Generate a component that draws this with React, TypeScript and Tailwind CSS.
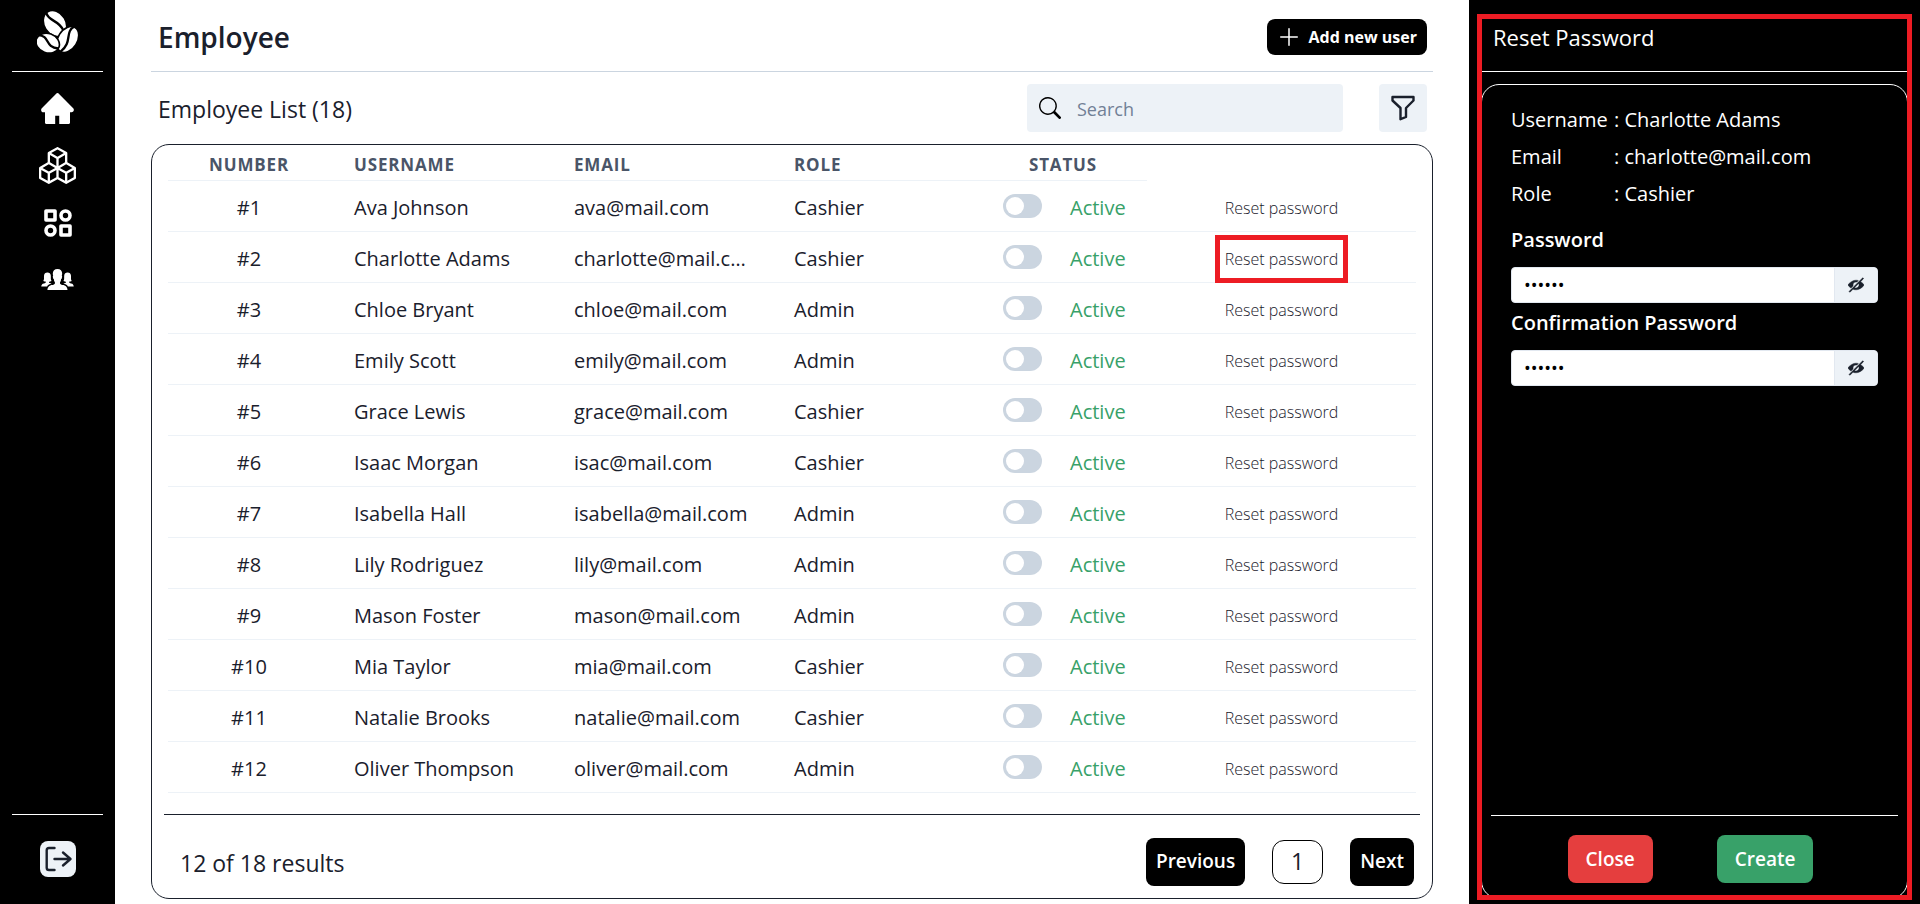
import type { ReactNode } from "react";
import { AiFillHome } from "react-icons/ai";
import { BsBoxes, BsPlusLg, BsSearch } from "react-icons/bs";
import { IoIosPeople } from "react-icons/io";

type Employee = { name: string; email: string; role: "Cashier" | "Admin" };

const employees: Employee[] = [
  { name: "Ava Johnson", email: "ava@mail.com", role: "Cashier" },
  { name: "Charlotte Adams", email: "charlotte@mail.com", role: "Cashier" },
  { name: "Chloe Bryant", email: "chloe@mail.com", role: "Admin" },
  { name: "Emily Scott", email: "emily@mail.com", role: "Admin" },
  { name: "Grace Lewis", email: "grace@mail.com", role: "Cashier" },
  { name: "Isaac Morgan", email: "isac@mail.com", role: "Cashier" },
  { name: "Isabella Hall", email: "isabella@mail.com", role: "Admin" },
  { name: "Lily Rodriguez", email: "lily@mail.com", role: "Admin" },
  { name: "Mason Foster", email: "mason@mail.com", role: "Admin" },
  { name: "Mia Taylor", email: "mia@mail.com", role: "Cashier" },
  { name: "Natalie Brooks", email: "natalie@mail.com", role: "Cashier" },
  { name: "Oliver Thompson", email: "oliver@mail.com", role: "Admin" },
];

const selected = employees[1];

function BeansLogo() {
  return (
    <svg viewBox="0 0 123 125" className="h-[42px] w-[41px]" aria-hidden="true">
      <g fill="#fff" stroke="#000" strokeWidth="5">
        <ellipse cx="54" cy="37" rx="30" ry="39" transform="rotate(-32 54 37)" stroke="none" />
        <path d="M28 6C36 32 66 26 79 58" fill="none" strokeWidth="7" />
        <ellipse cx="92" cy="85" rx="29" ry="42" transform="rotate(32 92 85)" />
        <path d="M112 46C82 62 108 94 70 122" fill="none" strokeWidth="7" />
        <ellipse cx="32" cy="96" rx="36" ry="29" transform="rotate(20 32 96)" />
        <path d="M4 72C40 74 22 108 64 112" fill="none" strokeWidth="7" />
      </g>
    </svg>
  );
}

function CategoryIcon() {
  return (
    <svg viewBox="0 0 24 24" className="size-9" fill="none" stroke="currentColor" strokeWidth="2.4" strokeLinejoin="round" aria-hidden="true">
      <rect x="4" y="4" width="6" height="6" />
      <circle cx="17" cy="7" r="3" />
      <circle cx="7" cy="17" r="3" />
      <rect x="14" y="14" width="6" height="6" />
    </svg>
  );
}

function LogoutIcon() {
  return (
    <svg viewBox="0 0 36 36" className="size-9" fill="none" stroke="#1A202C" strokeWidth="2.4" strokeLinecap="round" strokeLinejoin="round" aria-hidden="true">
      <path d="M14.5 7H9a2.3 2.3 0 0 0-2.3 2.3v17.4A2.3 2.3 0 0 0 9 29h5.5M14.5 18h16M23 11.5l7.500 6.500-7.500 6.500" />
    </svg>
  );
}

function FilterIcon() {
  return (
    <svg viewBox="0 0 24 26" className="h-[26px] w-6" fill="none" stroke="#1A202C" strokeWidth="2.4" strokeLinejoin="round" aria-hidden="true">
      <path d="M1.500 2h21v3.500l-7.500 7.500v9l-5.500 2.200V13L1.500 5.500z" />
    </svg>
  );
}

function EyeOffIcon() {
  return (
    <svg viewBox="0 0 24 24" className="size-4" fill="#1A202C" stroke="#1A202C" strokeWidth="0.6" aria-hidden="true">
      <path d="M23.2,10.549a20.954,20.954,0,0,0-4.3-3.6l4-3.995a1,1,0,1,0-1.414-1.414l-.018.018a.737.737,0,0,1-.173.291l-19.5,19.5c-.008.007-.018.009-.026.017a1,1,0,0,0,1.631,1.088l4.146-4.146a11.26,11.26,0,0,0,4.31.939h.3c4.256,0,8.489-2.984,11.051-5.8A2.171,2.171,0,0,0,23.2,10.549ZM16.313,13.27a4.581,4.581,0,0,1-3,3.028,4.3,4.3,0,0,1-3.1-.19.253.253,0,0,1-.068-.407l5.56-5.559a.252.252,0,0,1,.407.067A4.3,4.3,0,0,1,16.313,13.27Z" />
      <path d="M7.615,13.4a.244.244,0,0,0,.061-.24A4.315,4.315,0,0,1,7.5,12,4.5,4.5,0,0,1,12,7.5a4.276,4.276,0,0,1,1.16.173.244.244,0,0,0,.24-.062l1.941-1.942a.254.254,0,0,0-.1-.421A10.413,10.413,0,0,0,12,4.75C7.7,4.692,3.4,7.7.813,10.549a2.15,2.15,0,0,0-.007,2.9,21.209,21.209,0,0,0,3.438,3.03.256.256,0,0,0,.326-.029Z" />
    </svg>
  );
}

function NavLink({ label, children }: { label: string; children: ReactNode }) {
  return (
    <a href="#" aria-label={label} className="flex h-[57px] items-center justify-center">
      {children}
    </a>
  );
}

function Sidebar() {
  return (
    <nav className="flex w-[115px] shrink-0 flex-col bg-black px-3 text-white">
      <div className="flex h-[72px] items-center justify-center border-b border-white pb-2">
        <BeansLogo />
      </div>
      <div className="flex-1 pt-2">
        <NavLink label="Home"><AiFillHome size={37} /></NavLink>
        <NavLink label="Products"><BsBoxes size={37} /></NavLink>
        <NavLink label="Categories"><CategoryIcon /></NavLink>
        <NavLink label="Employees"><IoIosPeople size={37} /></NavLink>
      </div>
      <div className="flex h-[90px] justify-center border-t border-white pt-[26px]">
        <button type="button" aria-label="Log out" className="size-9 rounded-lg bg-[#EDF2F7]">
          <LogoutIcon />
        </button>
      </div>
    </nav>
  );
}

function EmployeeTable() {
  return (
    <table className="w-full table-fixed border-separate border-spacing-0 text-left">
      <colgroup>
        <col className="w-[162px]" />
        <col className="w-[220px]" />
        <col className="w-[220px]" />
        <col className="w-[209px]" />
        <col className="w-[168px]" />
        <col />
      </colgroup>
      <thead>
        <tr className="h-9 text-[17px] leading-6 tracking-wider text-[#4A5568] uppercase">
          <th className="border-b border-[#EDF2F7] pt-1 text-center font-bold">Number</th>
          <th className="border-b border-[#EDF2F7] px-6 pt-1 font-bold">Username</th>
          <th className="border-b border-[#EDF2F7] px-6 pt-1 font-bold">Email</th>
          <th className="border-b border-[#EDF2F7] px-6 pt-1 font-bold">Role</th>
          <th className="border-b border-[#EDF2F7] pt-1 text-center font-bold">Status</th>
          <td />
        </tr>
      </thead>
      <tbody>
        {employees.map((e, i) => (
          <tr key={e.email} className="h-[51px] text-xl">
            <td className="border-b border-[#EDF2F7] pt-1 text-center">#{i + 1}</td>
            <td className="truncate border-b border-[#EDF2F7] pt-1 pl-6">{e.name}</td>
            <td className="truncate border-b border-[#EDF2F7] pt-1 pr-5 pl-6">{e.email}</td>
            <td className="border-b border-[#EDF2F7] px-6 pt-1">{e.role}</td>
            <td className="border-b border-[#EDF2F7] pl-6">
              <label className="flex items-center gap-7 text-[#38A169]">
                <input
                  type="checkbox"
                  role="switch"
                  className="h-6 w-[39px] shrink-0 appearance-none rounded-full bg-[#CBD5E0] p-[3px] before:block before:size-[18px] before:rounded-full before:bg-white checked:bg-[#38A169] checked:before:ml-auto"
                />
                <span className="pt-1">Active</span>
              </label>
            </td>
            <td className="border-b border-[#EDF2F7] pt-0.5 text-center">
              <button type="button" className="relative text-base font-light">
                Reset password
                {e === selected && (
                  <span className="pointer-events-none absolute -inset-x-2.5 -inset-y-3 border-[5px] border-[#ED1C24]" />
                )}
              </button>
            </td>
          </tr>
        ))}
      </tbody>
    </table>
  );
}

function EmployeePage() {
  return (
    <main className="flex min-w-0 flex-1 flex-col bg-white px-9 pb-[5px] text-[#1A202C]">
      <header className="flex h-[72px] items-center justify-between border-b border-[#CBD5E0] pt-0.5 pr-1.5 pl-[7px]">
        <h1 className="text-[28px] leading-9 font-semibold">Employee</h1>
        <button type="button" className="flex h-9 items-center gap-2 rounded-lg bg-black px-2.5 text-base font-bold text-white">
          <BsPlusLg size={24} />
          Add new user
        </button>
      </header>
      <div className="flex h-[72px] items-center justify-between pr-1.5 pl-[7px]">
        <h2 className="pt-0.5 text-[23px] font-[380]">Employee List (18)</h2>
        <div className="flex gap-9">
          <label className="flex h-12 w-[316px] items-center gap-4 rounded-sm bg-[#EDF2F7] px-3">
            <BsSearch size={22} className="shrink-0 text-black" />
            <input type="search" aria-label="Search" placeholder="Search" className="min-w-0 flex-1 bg-transparent pt-0.5 text-lg outline-none placeholder:text-[#718096]" />
          </label>
          <button type="button" aria-label="Filter" className="flex size-12 items-center justify-center rounded-sm bg-[#EDF2F7]">
            <FilterIcon />
          </button>
        </div>
      </div>
      <section className="flex flex-1 flex-col rounded-[18px] border border-[#1A202C] px-3">
        <div className="flex-1 px-1">
          <EmployeeTable />
        </div>
        <footer className="flex h-[84px] items-center justify-between border-t border-[#1A202C] pt-3.5 pr-1.5 pb-1 pl-4">
          <p className="pt-1 text-[23px] font-[380]">12 of 18 results</p>
          <div className="flex items-center gap-[27px]">
            <button type="button" className="h-12 rounded-lg bg-black px-2.5 text-[19px] font-semibold text-white">Previous</button>
            <span className="flex h-11 w-[51px] items-center justify-center rounded-xl border border-black text-[23px] font-[380]">1</span>
            <button type="button" className="h-12 rounded-lg bg-black px-2.5 text-[19px] font-semibold text-white">Next</button>
          </div>
        </footer>
      </section>
    </main>
  );
}

function Detail({ label, value }: { label: string; value: string }) {
  return (
    <div className="flex h-[37px] items-center text-xl">
      <dt className="w-[103px]">{label}</dt>
      <dd>: {value}</dd>
    </div>
  );
}

function PasswordField({ id, label }: { id: string; label: string }) {
  return (
    <div>
      <label htmlFor={id} className="flex h-[47px] items-center pb-2 text-xl font-semibold">{label}</label>
      <div className="flex h-9 rounded-sm border border-[#E2E8F0] bg-white">
        <input id={id} type="password" defaultValue="secret" className="min-w-0 flex-1 px-3 text-lg text-black outline-none" />
        <button type="button" aria-label="Show password" className="flex w-[43px] items-center justify-center rounded-r-sm border-l border-[#E2E8F0] bg-[#EDF2F7]">
          <EyeOffIcon />
        </button>
      </div>
    </div>
  );
}

function ResetPasswordPanel() {
  return (
    <aside className="relative flex w-[451px] shrink-0 flex-col bg-black px-3 pb-[5px] text-white">
      <header className="flex h-[72px] items-center border-b border-white pt-1 pl-3">
        <h2 className="text-[22px]">Reset Password</h2>
      </header>
      <form className="mt-3 flex flex-1 flex-col rounded-[18px] border border-white px-[9px]">
        <div className="flex-1 px-5 pt-4">
          <dl>
            <Detail label="Username" value={selected.name} />
            <Detail label="Email" value={selected.email} />
            <Detail label="Role" value={selected.role} />
          </dl>
          <div className="mt-2">
            <PasswordField id="password" label="Password" />
            <PasswordField id="confirmation" label="Confirmation Password" />
          </div>
        </div>
        <footer className="flex h-[83px] justify-center gap-16 border-t border-white pt-[19px] pr-2">
          <button type="button" className="h-12 rounded-lg bg-[#E53E3E] px-[18px] text-[19px] font-semibold">Close</button>
          <button type="button" className="h-12 rounded-lg bg-[#38A169] px-[18px] text-[19px] font-semibold">Create</button>
        </footer>
      </form>
      <div className="pointer-events-none absolute top-3.5 right-2 bottom-1 left-2 border-[5px] border-[#ED1C24]" />
    </aside>
  );
}

export default function App() {
  return (
    <div className="flex min-h-screen bg-white font-['Open_Sans','Noto_Sans',sans-serif]">
      <Sidebar />
      <EmployeePage />
      <ResetPasswordPanel />
    </div>
  );
}
